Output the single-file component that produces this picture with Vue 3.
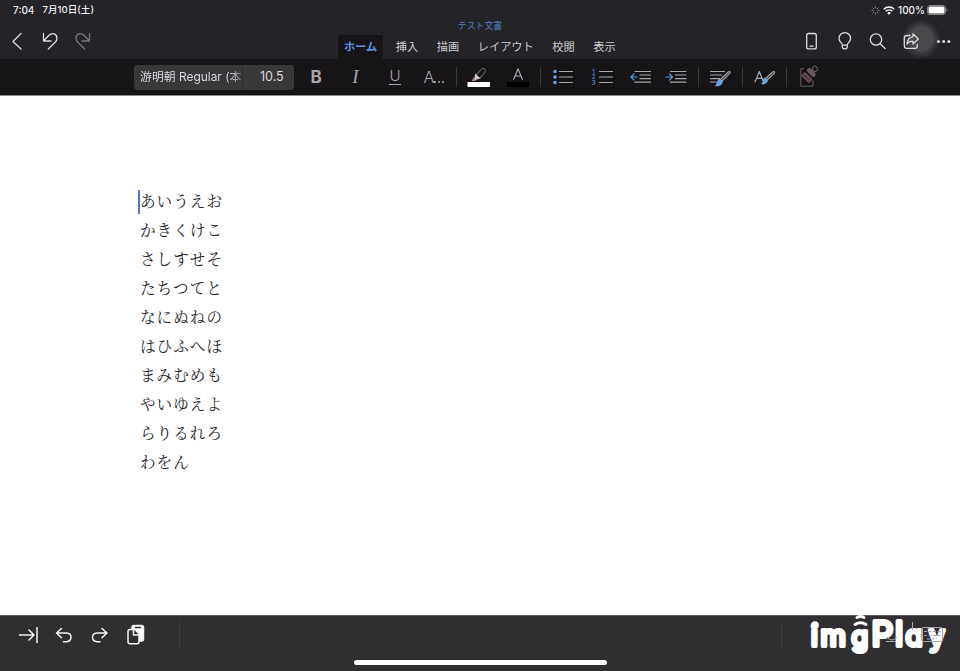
<script setup>
import { ref } from 'vue'

const tabs = ['ホーム', '挿入', '描画', 'レイアウト', '校閲', '表示']
const activeTab = ref('ホーム')

const lines = [
  'あいうえお',
  'かきくけこ',
  'さしすせそ',
  'たちつてと',
  'なにぬねの',
  'はひふへほ',
  'まみむめも',
  'やいゆえよ',
  'らりるれろ',
  'わをん',
]
</script>

<template>
  <div class="app">
    <header class="header">
      <div class="status">
        <span class="time">7:04</span>
        <span class="date">7月10日(土)</span>
        <div class="status-right">
          <svg class="spinner" width="9" height="9" viewBox="0 0 9 9">
            <path d="M4.5 .5v2M7.3 1.7 6 3M8.5 4.5h-2M7.3 7.3 6 6M4.5 8.5v-2M1.7 7.3 3 6M.5 4.5h2M1.7 1.7 3 3" />
          </svg>
          <svg class="wifi" width="12" height="9" viewBox="0 0 12 9">
            <path d="M.8 3.2a7.4 7.4 0 0 1 10.4 0M2.8 5.3a4.6 4.6 0 0 1 6.4 0" />
            <path class="fill" d="M6 8.7 4.2 6.9a2.6 2.6 0 0 1 3.6 0z" />
          </svg>
          <span class="percent">100%</span>
          <svg width="21" height="10" viewBox="0 0 21 10">
            <rect x=".5" y=".5" width="18" height="9" rx="2.5" fill="none" stroke="#8b898d" />
            <rect x="1.5" y="1.5" width="16" height="7" rx="1.5" fill="#fff" />
            <path d="M19.5 3.5v3q1-.4 1-1.5t-1-1.5" fill="#8b898d" />
          </svg>
        </div>
      </div>

      <div class="nav">
        <div class="tools">
          <button><svg class="icon" viewBox="0 0 24 24"><path d="m16 4.5-8 8 8 7.5" /></svg></button>
          <button><svg class="icon" viewBox="0 0 24 24"><path d="M5.5 4.5V12H13M6 11.5l5-5.2c3.5-3.5 8-1.2 8 3 0 1.6-.7 2.8-1.8 3.9L10.3 20" /></svg></button>
          <button class="off"><svg class="icon" viewBox="0 0 24 24"><path d="M18.5 4.5V12H11M18 11.5l-5-5.2c-3.5-3.5-8-1.2-8 3 0 1.6.7 2.8 1.8 3.9l6.9 6.8" /></svg></button>
        </div>

        <div class="middle">
          <div class="title">テスト文書</div>
          <div class="tabs">
            <button
              v-for="tab in tabs"
              :key="tab"
              class="tab"
              :class="{ active: tab === activeTab }"
              @click="activeTab = tab"
            >{{ tab }}</button>
          </div>
        </div>

        <div class="tools">
          <button><svg class="icon" viewBox="0 0 24 24"><rect x="6.7" y="4.5" width="9.6" height="15.4" rx="2" /><path d="M10 17.2h3" /></svg></button>
          <button><svg class="icon" viewBox="0 0 24 24"><path d="M9.3 16.2c0-2.2-3.3-3.6-3.3-6.8a5.8 5.8 0 0 1 11.6 0c0 3.2-3.3 4.6-3.3 6.8v1.6q0 2-2 2h-1q-2 0-2-2zM9.3 16.2h5" /></svg></button>
          <button><svg class="icon" viewBox="0 0 24 24"><circle cx="10" cy="10.5" r="5.7" /><path d="m14.2 14.7 4.9 4.8" /></svg></button>
          <button class="share">
            <span class="touch"></span>
            <svg class="icon" viewBox="0 0 24 24"><path d="M11 6.5H7.7q-2.4 0-2.4 2.4v8q0 2.4 2.4 2.4h8.2q2.4 0 2.4-2.4v-1.5" /><path d="M14 4.8 19.3 10 14 15v-2.9c-3 0-4.7.9-6 3.1.2-4.4 2.2-7.1 6-7.4z" /></svg>
          </button>
          <button><svg class="icon dots" viewBox="0 0 24 24"><circle cx="6.5" cy="12.5" r="1.5" /><circle cx="11.7" cy="12.5" r="1.5" /><circle cx="16.9" cy="12.5" r="1.5" /></svg></button>
        </div>
      </div>
    </header>

    <div class="ribbon">
      <div class="font-box">
        <span class="font-name">游明朝 Regular (本</span>
        <span class="font-size">10.5</span>
      </div>
      <div class="ribbon-tools">
        <span class="bold">B</span>
        <span class="italic">I</span>
        <span class="under">U</span>
        <span class="effects">A<i></i><i></i><i></i></span>
        <hr>
        <svg class="icon wide" viewBox="0 0 28 24">
          <path d="m11.5 9.5 5.2-5.4q1.4-1.3 3 .1t.3 3L15 13" stroke="#5c5a5e" />
          <path d="m10.5 8.5 5 5-3.5 1-3.5 1.5z" fill="#c6c4c8" stroke="none" />
          <path d="m9 12-2.3 4h4z" fill="#c08467" stroke="none" />
          <path d="M2.5 17H25v5H2.5z" fill="#fff" stroke="none" />
        </svg>
        <svg class="icon wide" viewBox="0 0 28 24">
          <path d="m9.7 14.2 4.300-10.400 4.300 10.400M11 11h6" />
          <path d="M3 17h22v5H3z" fill="#000" stroke="none" />
        </svg>
        <hr>
        <svg class="icon" viewBox="0 0 24 24">
          <path d="M8.5 6.5h13M8.5 12h13M8.5 17.5h13" />
          <g fill="#62a5e6" stroke="none"><circle cx="4" cy="6.5" r="1.8" /><circle cx="4" cy="12" r="1.8" /><circle cx="4" cy="17.5" r="1.8" /></g>
        </svg>
        <svg class="icon" viewBox="0 0 24 24">
          <path d="M8.5 6.5h13M8.5 12h13M8.5 17.5h13" />
          <g class="nums"><text x="2.5" y="8.5">1</text><text x="2.5" y="14.3">2</text><text x="2.5" y="20.1">3</text></g>
        </svg>
        <svg class="icon" viewBox="0 0 24 24">
          <path d="M6 6.5h15.5M11 10h10.5M11 13.7h10.5M6 17.2h15.5" />
          <path class="blue" d="M8 12H2m3-3-3 3 3 3" />
        </svg>
        <svg class="icon" viewBox="0 0 24 24">
          <path d="M5.5 6.5H21M10.5 10H21M10.5 13.7H21M5.5 17.2H21" />
          <path class="blue" d="M1 12h6.5M4.5 9l3 3-3 3" />
        </svg>
        <hr>
        <svg class="icon" viewBox="0 0 24 24">
          <path d="M2.5 6.5h14M2.5 10h11M2.5 13.7h9M2.5 17h6" />
          <path d="m12 15 8.3-8q1.2-.8 1.7-.3t-.3 1.7L14 16" />
          <path class="brush" d="M11.5 13.8q3 .8 3.3 3.4c-1 3-4 5-8.3 3.8 3-1 1.9-6.2 5-7.2" />
        </svg>
        <hr>
        <svg class="icon" viewBox="0 0 24 24">
          <path d="m2 17 4.3-10.5L10 15.5M3.5 13.3h5.7" />
          <path d="m12.5 13.5 7.3-6.500q1.2-.8 1.7-.3t-.3 1.7L14 15" />
          <path class="brush" d="M12 12.4q2.8.8 3 3c-1 3-4 4.8-7.2 3.6 2.4-1 1.4-5.7 4.2-6.6" />
        </svg>
        <hr>
        <svg class="icon stamp" viewBox="0 0 24 24">
          <path d="M5.5 3.7H2.8v17.5H15V15.5" />
          <g transform="rotate(45 12.5 8.5)">
            <circle cx="12.3" cy="2" r="2.5" />
            <path d="M11 4.2v1.3h3V4.200" />
            <rect x="7.5" y="5.5" width="9.5" height="3.5" rx="1.6" fill="#775157" />
            <rect x="8" y="12" width="9.5" height="4" fill="#4e363c" stroke="#8a6268" stroke-dasharray="2 1" />
          </g>
        </svg>
      </div>
    </div>

    <main class="page">
      <div class="text">
        <span class="caret"></span>
        <p v-for="line in lines" :key="line">{{ line }}</p>
      </div>
    </main>

    <footer class="footer">
      <div class="keys">
        <svg class="icon" viewBox="0 0 24 24"><path d="M2.5 12H17m-5-5 5 5-5 5M20 4.5v15" /></svg>
        <svg class="icon" viewBox="0 0 24 24"><path d="M9.5 5.5 4.5 10l5 4.8M4.5 10h10q4.500.3 4.500 4.300t-4.500 4.400h-3" /></svg>
        <svg class="icon" viewBox="0 0 24 24"><path d="m14 5.500 5 4.500-5 4.800M19 10H9Q4.500 10.300 4.500 14.300T9 18.700h3" /></svg>
        <svg class="icon" viewBox="0 0 24 24">
          <rect x="9" y="2.5" width="11.500" height="15.500" rx="2" fill="#fff" />
          <path d="M12.500 4.500h5" stroke="#302e31" />
          <path d="M7 6.500h4.800l4.200 4.200v8.100q0 2-2 2H7q-2 0-2-2V8.500q0-2 2-2z" fill="#302e31" />
          <path d="M10.500 7v5H16" />
        </svg>
      </div>
      <hr class="first">
      <hr class="second">
      <svg class="watermark" width="150" height="56" viewBox="805 615 150 56">
        <path d="M857 617.5q3.5-1.8 7 0M855 624.5q5.5-3.5 11 0" class="waves" />
        <text y="646">
          <tspan x="811">i</tspan><tspan class="m" x="820.5">m</tspan><tspan class="g" x="851.5">g</tspan><tspan class="tall" x="871.5">P</tspan><tspan class="tall" x="895">l</tspan><tspan x="905.500">a</tspan><tspan x="929">y</tspan>
        </text>
        <circle cx="815" cy="625" r="3.7" fill="#fff" />
        <g class="behind">
          <path d="M912.5 622v8M887 637q5 6 10 0M886 641.5h10" />
          <rect x="921.5" y="627.5" width="21" height="14" rx="2" />
          <path d="M924 631.5h17M924 635.500h17M927 639h10" stroke-dasharray="3 1.5" />
        </g>
      </svg>
      <div class="home-bar"></div>
    </footer>
  </div>
</template>

<style>
body {
  margin: 0;
}
</style>

<style scoped>
.app {
  width: 960px;
  height: 671px;
  display: flex;
  flex-direction: column;
  overflow: hidden;
  background: #fff;
  color: #dcdade;
  font-family: Inter, "Noto Sans CJK JP", sans-serif;
}
button {
  border: none;
  background: none;
  padding: 0;
  color: inherit;
  font: inherit;
}
.icon {
  display: block;
  width: 24px;
  height: 24px;
  overflow: visible;
  fill: none;
  stroke: currentColor;
  stroke-width: 1.3;
  stroke-linecap: round;
  stroke-linejoin: round;
}

.header {
  height: 59px;
  background: #242327;
}
.status {
  height: 20px;
  display: flex;
  align-items: center;
  gap: 8px;
  padding: 0 12px 0 13px;
  font-size: 10px;
  font-weight: 500;
  line-height: 20px;
  color: #f0eef1;
}
.date {
  font-size: 9.6px;
}
.status-right {
  display: flex;
  align-items: center;
  margin-left: auto;
}
.spinner {
  stroke: #88868a;
  margin-right: 3px;
}
.wifi {
  fill: none;
  stroke: #fff;
  stroke-width: 1.5;
}
.wifi .fill {
  fill: #fff;
  stroke: none;
}
.percent {
  margin: 0 2px 0 3px;
}

.nav {
  height: 39px;
  display: grid;
  grid-template-columns: 338px 1fr 165px;
}
.tools {
  display: flex;
  align-items: center;
  padding-top: 3px;
  height: 36px;
}
.tools button {
  width: 33px;
  display: flex;
  justify-content: center;
  position: relative;
}
.tools .off {
  color: #77757a;
}
.touch {
  position: absolute;
  left: 9px;
  top: -8px;
  width: 36px;
  height: 36px;
  border-radius: 50%;
  background: radial-gradient(circle, #49474a 0 12.5px, #3a383c 13.5px 15px, #312f33 16px);
}
.share .icon {
  position: relative;
}
.dots {
  fill: currentColor;
  stroke: none;
}
.middle {
  display: flex;
  flex-direction: column;
}
.title {
  width: 284px;
  height: 15px;
  line-height: 11px;
  text-align: center;
  font-size: 8.9px;
  color: #5582cc;
}
.tabs {
  display: flex;
  height: 24px;
}
.tab {
  height: 24px;
  padding: 0 9.3px;
  font-size: 11.2px;
  line-height: 22px;
  white-space: nowrap;
  color: #cfcdd1;
}
.tab.active {
  width: 45px;
  margin-right: 3.5px;
  padding: 0;
  border-radius: 3px 3px 0 0;
  background: #161417;
  color: #5c91e6;
  font-weight: 700;
}

.ribbon {
  height: 37px;
  flex: none;
  display: flex;
  align-items: center;
  padding-left: 134px;
  background: #161417;
  border-bottom: 1px solid #8d8b8e;
  box-sizing: border-box;
}
.font-box {
  width: 160px;
  height: 25px;
  display: flex;
  border-radius: 3px;
  background: #39373a;
  font-size: 12px;
  line-height: 24px;
}
.font-name {
  width: 109px;
  box-sizing: border-box;
  padding-left: 6px;
  white-space: nowrap;
  font-size: 11.9px;
  border-right: 1px solid #302e31;
  background: linear-gradient(90deg, #e4e2e6 92px, #6b696d 110px);
  background-clip: text;
  color: transparent;
}
.font-size {
  flex: 1;
  padding-left: 17px;
  font-size: 12.5px;
}
.ribbon-tools {
  display: grid;
  grid-template-columns: 40px 39px 40px 38px 7px 37px 41px 4px 41px 39px 38px 33px 11px 32px 13px 31px 13px 33px;
  align-items: center;
  justify-items: center;
  margin-left: 2px;
  color: #a9a7ab;
}
.ribbon-tools .icon {
  stroke-width: 1.2;
}
.ribbon-tools .wide {
  width: 28px;
}
.ribbon-tools hr {
  width: 1px;
  height: 20px;
  margin: 0;
  border: none;
  background: #39373a;
}
.bold {
  font-size: 17px;
  font-weight: 700;
}
.italic {
  font: italic 19px "Liberation Serif", serif;
}
.under {
  width: 12px;
  height: 15px;
  border-bottom: 1px solid;
  font-size: 15px;
  font-weight: 300;
  line-height: 13px;
  text-align: center;
}
.effects {
  display: flex;
  align-items: baseline;
  gap: 2px;
  font-size: 16px;
  font-weight: 300;
}
.effects i {
  width: 2.4px;
  height: 2.4px;
  border-radius: 50%;
  background: currentColor;
}
.effects i:first-of-type {
  margin-left: -3px;
}
.nums {
  font: 6px Inter, sans-serif;
  fill: #62a5e6;
  stroke: none;
  text-anchor: middle;
}
.icon .blue {
  stroke: #5597d8;
}
.icon .brush {
  fill: #62a5e6;
  stroke: none;
}
.ribbon-tools .stamp {
  color: #626064;
  stroke-width: 1;
}

.page {
  flex: 1;
  padding: 90px 0 0 140px;
  color: #262428;
  font: 400 15.6px/28.95px "Noto Serif CJK JP", "Noto Sans CJK JP", serif;
}
.text {
  position: relative;
  letter-spacing: 1px;
}
.text p {
  margin: 0;
}
.caret {
  position: absolute;
  left: -2px;
  top: 4px;
  width: 2px;
  height: 24px;
  background: #5577be;
}

.footer {
  position: relative;
  height: 56px;
  flex: none;
  display: flex;
  box-sizing: border-box;
  border-top: 1px solid #5b5a5d;
  background: #302e31;
  color: #f5f4f6;
}
.keys {
  display: flex;
  gap: 11.5px;
  padding: 7px 0 0 16.5px;
}
.keys .icon {
  stroke-width: 1.5;
}
.footer hr {
  width: 1px;
  height: 26px;
  margin: 6px 0 0;
  border: none;
  background: #403e41;
}
.footer .first {
  margin-left: 32px;
}
.footer .second {
  margin-left: 601px;
}
.watermark {
  position: absolute;
  left: 805px;
  top: -1px;
  overflow: visible;
}
.watermark text {
  font: 28px Inter, sans-serif;
  font-feature-settings: "cv11";
  fill: #fff;
  stroke: #fff;
  stroke-width: 4;
  stroke-linejoin: round;
}
.watermark .tall {
  font-size: 34px;
}
.watermark .m {
  font-size: 29px;
}
.watermark .g {
  font-size: 27px;
}
.waves {
  fill: none;
  stroke: #fff;
  stroke-width: 3;
  stroke-linecap: round;
}
.behind {
  fill: none;
  stroke: #aaa8ab;
}
.home-bar {
  position: absolute;
  left: 353.5px;
  top: 44px;
  width: 253px;
  height: 5px;
  border-radius: 3px;
  background: #fff;
}
</style>
